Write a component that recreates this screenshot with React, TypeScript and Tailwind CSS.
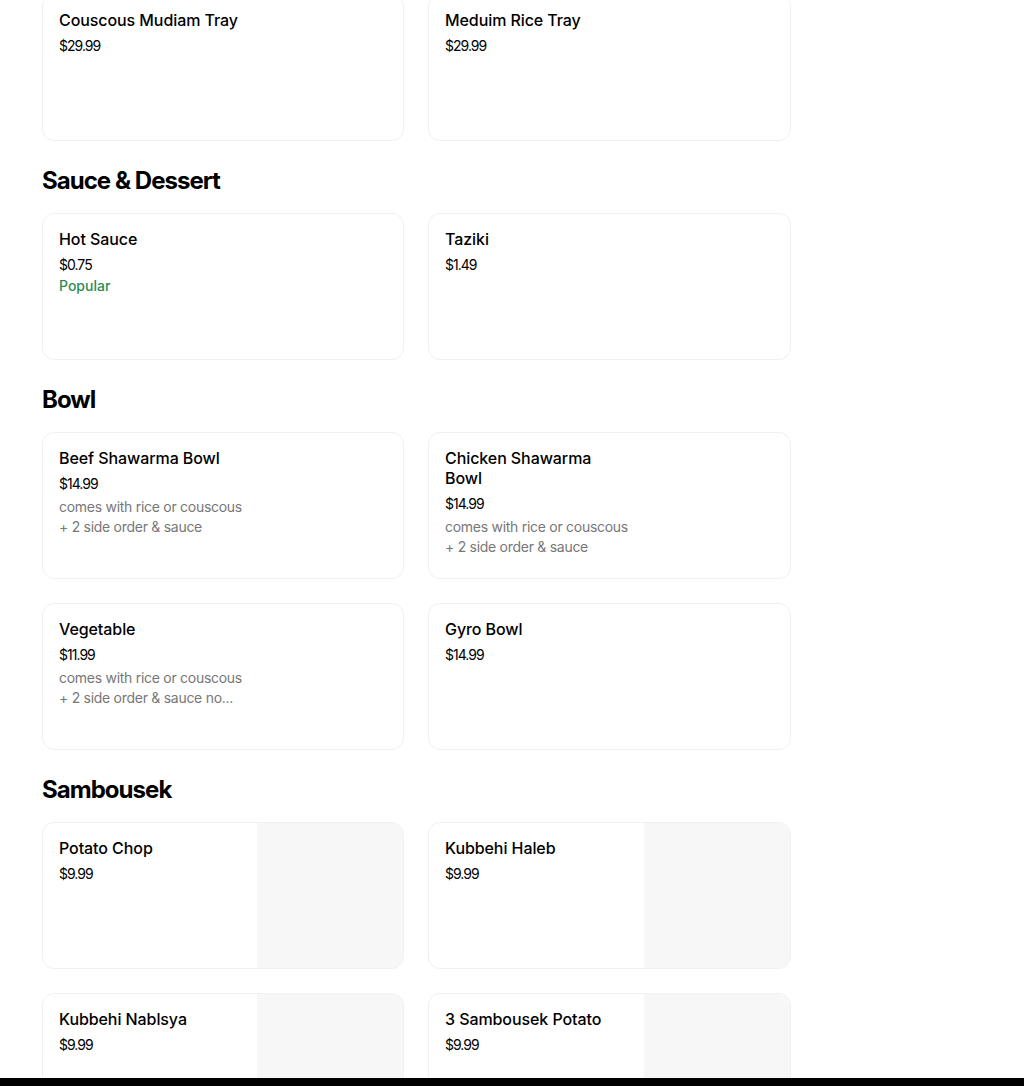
import React from "react";

type Item = {
  title: string[];
  price: string;
  desc?: string[];
  popular?: boolean;
  image?: boolean;
};

type Section = { name?: string; items: Item[] };

const sections: Section[] = [
  {
    items: [
      { title: ["Couscous Mudiam Tray"], price: "$29.99" },
      { title: ["Meduim Rice Tray"], price: "$29.99" },
    ],
  },
  {
    name: "Sauce & Dessert",
    items: [
      { title: ["Hot Sauce"], price: "$0.75", popular: true },
      { title: ["Taziki"], price: "$1.49" },
    ],
  },
  {
    name: "Bowl",
    items: [
      {
        title: ["Beef Shawarma Bowl"],
        price: "$14.99",
        desc: ["comes with rice or couscous", "+ 2 side order & sauce"],
      },
      {
        title: ["Chicken Shawarma", "Bowl"],
        price: "$14.99",
        desc: ["comes with rice or couscous", "+ 2 side order & sauce"],
      },
      {
        title: ["Vegetable"],
        price: "$11.99",
        desc: ["comes with rice or couscous", "+ 2 side order & sauce no..."],
      },
      { title: ["Gyro Bowl"], price: "$14.99" },
    ],
  },
  {
    name: "Sambousek",
    items: [
      { title: ["Potato Chop"], price: "$9.99", image: true },
      { title: ["Kubbehi Haleb"], price: "$9.99", image: true },
      { title: ["Kubbehi Nablsya"], price: "$9.99", image: true },
      { title: ["3 Sambousek Potato"], price: "$9.99", image: true },
    ],
  },
];

function Card({ item }: { item: Item }) {
  return (
    <div className="flex h-[147px] overflow-hidden rounded-xl border border-[#f1f1f1] bg-white">
      <div className="flex-1 px-4 pt-[15px]">
        <div className="text-[16px] font-medium leading-5 tracking-[-0.005em] text-[#000]">
          {item.title.map((t, i) => (
            <div key={i}>{t}</div>
          ))}
        </div>
        <div className="mt-[6px] text-[14px] leading-5 tracking-[-0.07em] text-[#000]">
          {item.price}
        </div>
        {item.popular && (
          <div className="mt-[1px] text-[14px] font-medium leading-5 text-[#2f8a52]">
            Popular
          </div>
        )}
        {item.desc && (
          <div className="mt-[3px] text-[14px] leading-5 tracking-[-0.02em] text-[#777777]">
            {item.desc.map((d, i) => (
              <div key={i}>{d}</div>
            ))}
          </div>
        )}
      </div>
      {item.image && <div className="h-full w-[146px] shrink-0 bg-[#f7f7f7]" />}
    </div>
  );
}

export default function App() {
  return (
    <div
      className="flex h-[1086px] flex-col overflow-hidden bg-white"
      style={{ fontFamily: "Inter, 'Noto Sans', sans-serif" }}
    >
      <div className="flex-1 overflow-hidden">
        <div className="ml-[42px] w-[749px] -mt-[6px]">
          {sections.map((s, si) => (
            <div key={si}>
              {s.name && (
                <h2 className="mt-6 mb-4 h-8 text-[24px] font-bold leading-8 tracking-[-0.04em] text-black">
                  {s.name}
                </h2>
              )}
              <div className="grid grid-cols-[362px_363px] gap-x-6 gap-y-6">
                {s.items.map((it, ii) => (
                  <Card key={ii} item={it} />
                ))}
              </div>
            </div>
          ))}
        </div>
      </div>
      <div className="h-2 shrink-0 bg-black" />
    </div>
  );
}
